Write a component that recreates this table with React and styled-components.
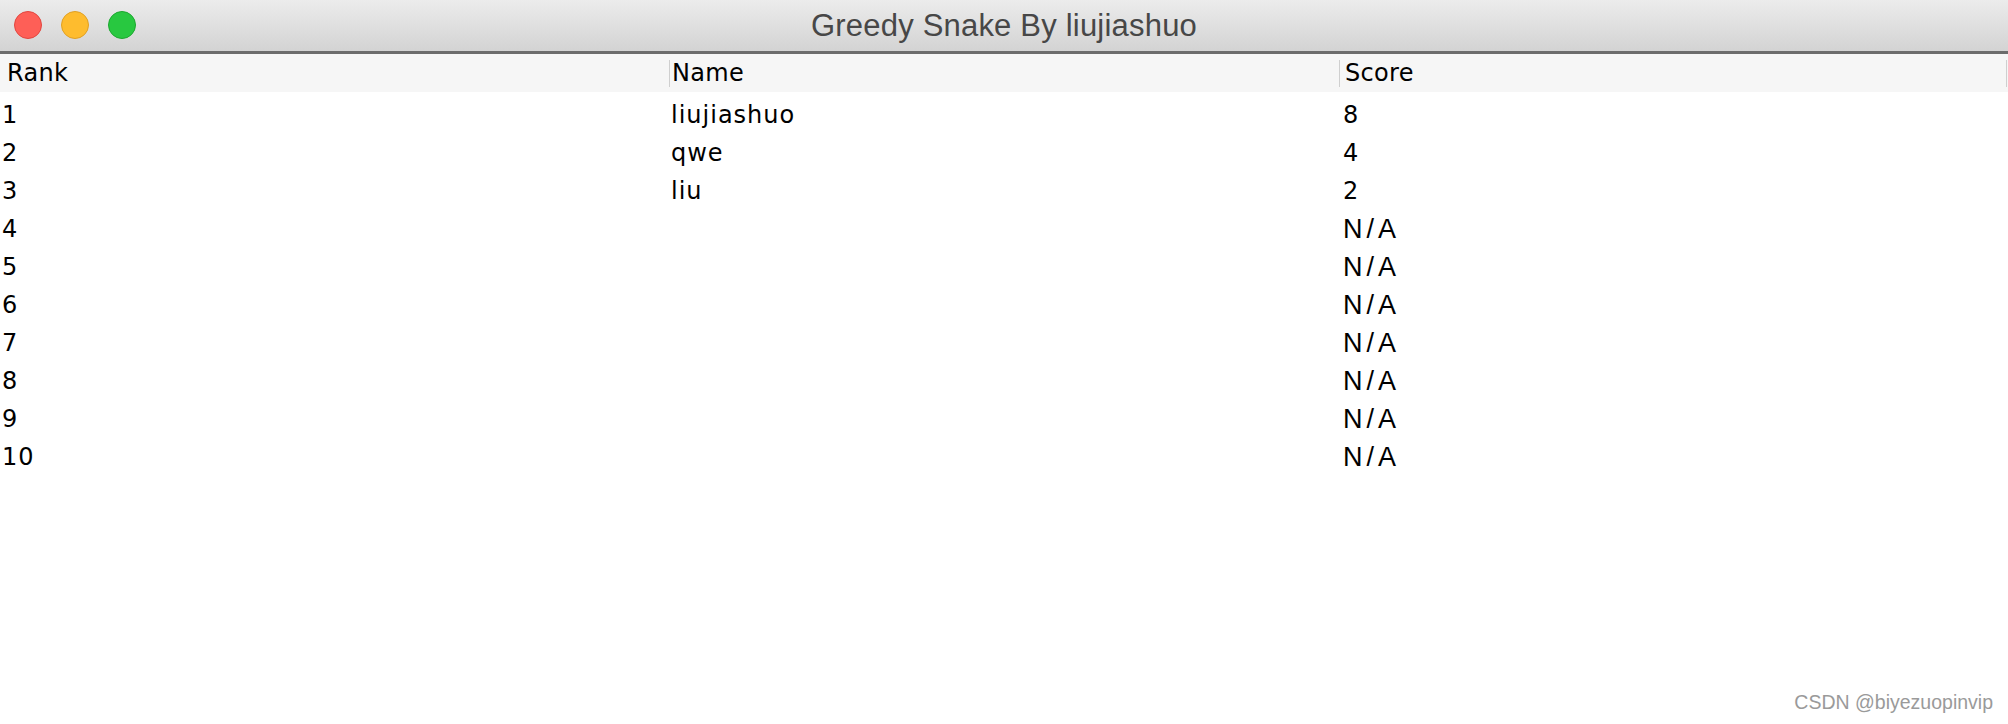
import React from 'react'
import styled, { createGlobalStyle } from 'styled-components'

const GlobalStyle = createGlobalStyle`
  html, body {
    margin: 0;
    padding: 0;
    background: #ffffff;
  }
  #root {
    min-height: 724px;
  }
`

const Window = styled.div`
  position: relative;
  width: 2008px;
  height: 724px;
  background: #ffffff;
  overflow: hidden;
`

const TitleBar = styled.div`
  position: relative;
  display: flex;
  align-items: center;
  justify-content: center;
  height: 51px;
  background: linear-gradient(#ececec, #d3d3d3);
  border-bottom: 3px solid #6c6c6c;
`

const Lights = styled.div`
  position: absolute;
  left: 14px;
  top: 11px;
  display: flex;
  gap: 19px;
`

const Light = styled.span`
  display: block;
  width: 28px;
  height: 28px;
  border-radius: 50%;
  box-sizing: border-box;
  background: ${p => p.$fill};
  border: 1px solid ${p => p.$edge};
`

const Title = styled.div`
  font-family: "Liberation Sans", Arial, sans-serif;
  font-size: 31px;
  letter-spacing: 0.2px;
  line-height: 51px;
  color: #474747;
`

const Table = styled.div`
  display: grid;
  grid-template-columns: 669px 670px 1fr;
  font-family: "DejaVu Sans", Verdana, sans-serif;
  font-size: 24px;
  color: #000000;
`

const HeaderCell = styled.div`
  position: relative;
  height: 38px;
  line-height: 38px;
  background: #f6f6f6;
  padding-left: ${p => p.$pad}px;
  letter-spacing: 0.3px;

  ${p => p.$divider && `
    &::before {
      content: '';
      position: absolute;
      left: 0;
      top: 6px;
      bottom: 5px;
      width: 1px;
      background: #cfcfcf;
    }
  `}

  ${p => p.$last && `
    &::after {
      content: '';
      position: absolute;
      right: 1px;
      top: 6px;
      bottom: 5px;
      width: 1px;
      background: #cfcfcf;
    }
  `}
`

const Body = styled.div`
  grid-column: 1 / -1;
  display: grid;
  grid-template-columns: subgrid;
  padding-top: 4px;
`

const Cell = styled.div`
  height: 38px;
  line-height: 38px;
  padding-left: ${p => p.$pad}px;
  letter-spacing: 1px;
  white-space: nowrap;
`

const Missing = styled.span`
  font-family: "Liberation Sans", Arial, sans-serif;
  font-size: 27px;
  letter-spacing: 4px;
`

const Watermark = styled.div`
  position: absolute;
  right: 15px;
  bottom: 10px;
  font-family: "Liberation Sans", Arial, sans-serif;
  font-size: 19.5px;
  color: #9a9a9a;
`

const scores = [
  { name: 'liujiashuo', score: 8 },
  { name: 'qwe', score: 4 },
  { name: 'liu', score: 2 },
]

const rows = Array.from({ length: 10 }, (_, i) => scores[i] || { name: '', score: null })

export default function App() {
  return (
    <Window>
      <GlobalStyle />
      <TitleBar>
        <Lights>
          <Light $fill="#fe5f57" $edge="#e2463f" />
          <Light $fill="#febc2e" $edge="#e0a024" />
          <Light $fill="#28c840" $edge="#1ca82f" />
        </Lights>
        <Title>Greedy Snake By liujiashuo</Title>
      </TitleBar>
      <Table>
        <HeaderCell $pad={7}>Rank</HeaderCell>
        <HeaderCell $pad={3} $divider>Name</HeaderCell>
        <HeaderCell $pad={6} $divider $last>Score</HeaderCell>
        <Body>
          {rows.map((r, i) => (
            <React.Fragment key={i}>
              <Cell $pad={2}>{i + 1}</Cell>
              <Cell $pad={2}>{r.name}</Cell>
              <Cell $pad={4}>{r.score === null ? <Missing>N/A</Missing> : r.score}</Cell>
            </React.Fragment>
          ))}
        </Body>
      </Table>
      <Watermark>CSDN @biyezuopinvip</Watermark>
    </Window>
  )
}
